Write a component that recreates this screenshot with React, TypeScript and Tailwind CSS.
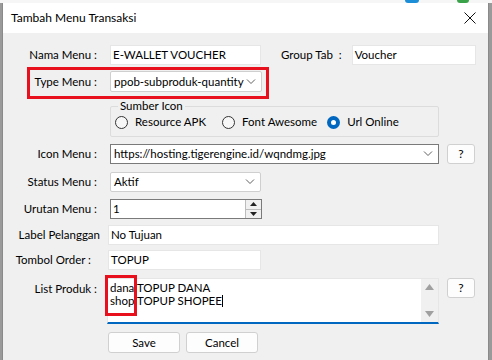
import React from 'react';

const font = { fontFamily: 'Lato, "Liberation Sans", Arial, sans-serif' };

function Chevron() {
  return (
    <svg width="10" height="6" viewBox="0 0 10 6" className="shrink-0">
      <path d="M1 0.5 L5 4.5 L9 0.5" fill="none" stroke="#606060" strokeWidth="1" />
    </svg>
  );
}

function Label({ children, className = '' }: { children: React.ReactNode; className?: string }) {
  return <div className={`w-[94px] shrink-0 text-right whitespace-nowrap ${className}`}>{children}</div>;
}

function Radio({ label, checked = false }: { label: string; checked?: boolean }) {
  return (
    <div className="flex items-center gap-[7px]">
      {checked ? (
        <span className="w-[13px] h-[13px] rounded-full bg-[#0067c0] flex items-center justify-center">
          <span className="w-[5px] h-[5px] rounded-full bg-white" />
        </span>
      ) : (
        <span className="w-[13px] h-[13px] rounded-full border border-[#333333] bg-[#f7f7f7]" />
      )}
      <span>{label}</span>
    </div>
  );
}

function HelpButton() {
  return (
    <button className="ml-[8px] w-[28px] h-[20px] rounded-[3px] border border-[#d0d0d0] bg-[#fdfdfd] text-[12px] leading-none text-black">
      ?
    </button>
  );
}

export default function App() {
  return (
    <div className="w-[492px] h-[360px] overflow-hidden bg-[#9a9a9a] relative text-[11.5px] text-black" style={font}>
      {/* background app peeking */}
      <div className="h-[3px] bg-[#f6f6f6] flex">
        <div className="ml-[405px] w-[14px] h-[3px] bg-[#1c8ed8] rounded-b-full" />
        <div className="ml-[38px] w-[12px] h-[3px] bg-[#3aa34a] rounded-b-full" />
      </div>

      <div className="ml-[2px] w-[487px] h-[357px] border-l border-r border-[#8a8a8a] bg-[#f0f0f0] flex flex-col">
        {/* title bar */}
        <div className="h-[30px] shrink-0 bg-white flex items-center justify-between pl-[8px] pr-[8px]">
          <span className="text-[12px]">Tambah Menu Transaksi</span>
          <svg width="12" height="12" viewBox="0 0 12 12" className="mr-[4px]">
            <path d="M0.5 0.5 L11.5 11.5 M11.5 0.5 L0.5 11.5" stroke="#111" strokeWidth="1" />
          </svg>
        </div>

        <div className="flex flex-col pt-[12px]">
          {/* Nama Menu / Group Tab */}
          <div className="flex items-center h-[20px]">
            <Label>Nama Menu :</Label>
            <div className="ml-[13px] w-[151px] h-[20px] bg-white border border-[#e6e6e6] flex items-center px-[2px]">
              E-WALLET VOUCHER
            </div>
            <span className="ml-[20px] whitespace-nowrap">Group Tab&nbsp;&nbsp;:</span>
            <div className="ml-[10px] w-[124px] h-[20px] bg-white border border-[#e6e6e6] flex items-center px-[2px]">
              Voucher
            </div>
          </div>

          {/* Type Menu */}
          <div className="relative flex items-center h-[21px] mt-[6px]">
            <Label>Type Menu :</Label>
            <div className="ml-[13px] w-[152px] h-[21px] bg-white border border-[#cfcfcf] rounded-[2px] flex items-center justify-between pl-[3px] pr-[5px]">
              <span className="whitespace-nowrap">ppob-subproduk-quantity</span>
              <Chevron />
            </div>
            <div className="absolute left-[24px] top-[-4px] w-[242px] h-[32px] border-[3px] border-[#e8101c] pointer-events-none" />
          </div>

          {/* Sumber Icon */}
          <div className="flex mt-[7px]">
            <div className="w-[94px] shrink-0" />
            <fieldset className="ml-[13px] w-[329px] h-[38px] border border-[#dcdcdc] rounded-[2px] px-[4px]">
              <legend className="ml-[3px] px-[2px] leading-[14px]">Sumber Icon</legend>
              <div className="flex items-center h-[20px] -mt-[1px]">
                <Radio label="Resource APK" />
                <div className="ml-[16px]"><Radio label="Font Awesome" /></div>
                <div className="ml-[10px]"><Radio label="Url Online" checked /></div>
              </div>
            </fieldset>
          </div>

          {/* Icon Menu */}
          <div className="flex items-center h-[20px] mt-[7px]">
            <Label>Icon Menu :</Label>
            <div className="ml-[13px] w-[329px] h-[20px] bg-white border border-[#7a7a7a] flex items-center justify-between pl-[3px] pr-[5px]">
              <span>https://hosting.tigerengine.id/wqndmg.jpg</span>
              <Chevron />
            </div>
            <HelpButton />
          </div>

          {/* Status Menu */}
          <div className="flex items-center h-[20px] mt-[8px]">
            <Label>Status Menu :</Label>
            <div className="ml-[13px] w-[151px] h-[20px] bg-white border border-[#cfcfcf] rounded-[2px] flex items-center justify-between pl-[3px] pr-[5px]">
              <span>Aktif</span>
              <Chevron />
            </div>
          </div>

          {/* Urutan Menu */}
          <div className="flex items-center h-[20px] mt-[7px]">
            <Label>Urutan Menu :</Label>
            <div className="ml-[13px] w-[152px] h-[20px] bg-white border border-[#7a7a7a] flex items-center justify-between pl-[2px]">
              <span>1</span>
              <div className="w-[16px] h-[18px] flex flex-col border-l border-[#bcbcbc]">
                <div className="flex-1 bg-[#f0f0f0] border-b border-[#bcbcbc] flex items-center justify-center">
                  <svg width="7" height="4" viewBox="0 0 7 4"><path d="M0 4 L3.5 0 L7 4 Z" fill="#222" /></svg>
                </div>
                <div className="flex-1 bg-[#f0f0f0] flex items-center justify-center">
                  <svg width="7" height="4" viewBox="0 0 7 4"><path d="M0 0 L3.5 4 L7 0 Z" fill="#222" /></svg>
                </div>
              </div>
            </div>
          </div>

          {/* Label Pelanggan */}
          <div className="flex items-center h-[20px] mt-[6px]">
            <div className="w-[97px] shrink-0 text-right whitespace-nowrap">Label Pelanggan</div>
            <div className="ml-[8px] w-[331px] h-[20px] bg-white border border-[#e6e6e6] flex items-center px-[2px]">
              No Tujuan
            </div>
          </div>

          {/* Tombol Order */}
          <div className="flex items-center h-[20px] mt-[5px]">
            <Label className="pr-[6px]">Tombol Order :</Label>
            <div className="ml-[11px] w-[153px] h-[20px] bg-white border border-[#e6e6e6] flex items-center px-[2px]">
              TOPUP
            </div>
          </div>

          {/* List Produk */}
          <div className="relative flex items-start mt-[8px]">
            <Label className="pt-[2px]">List Produk :</Label>
            <div className="ml-[10px] w-[332px] h-[46px] bg-white border border-[#e6e6e6] border-b-2 border-b-[#0067c0] flex">
              <div className="flex-1 pl-[2px] pt-[2px] leading-[13px]">
                <div>dana TOPUP DANA</div>
                <div className="flex items-center">
                  shop TOPUP SHOPEE<span className="inline-block w-px h-[12px] bg-black" />
                </div>
              </div>
              <div className="w-[17px] bg-[#f0f0f0] flex flex-col justify-between items-center py-[5px]">
                <svg width="9" height="6" viewBox="0 0 9 6"><path d="M0 6 L4.5 0 L9 6 Z" fill="#a0a0a0" /></svg>
                <svg width="9" height="6" viewBox="0 0 9 6"><path d="M0 0 L4.5 6 L9 0 Z" fill="#a0a0a0" /></svg>
              </div>
            </div>
            <HelpButton />
            <div className="absolute left-[102px] top-[-3px] w-[32px] h-[41px] border-[3px] border-[#e8101c] pointer-events-none" />
          </div>

          {/* Buttons */}
          <div className="flex items-center mt-[8px] pl-[105px] gap-[6px]">
            <button className="w-[72px] h-[21px] rounded-[3px] border border-[#d0d0d0] bg-[#fdfdfd]">Save</button>
            <button className="w-[72px] h-[21px] rounded-[3px] border border-[#d0d0d0] bg-[#fdfdfd]">Cancel</button>
          </div>
        </div>
      </div>
    </div>
  );
}
